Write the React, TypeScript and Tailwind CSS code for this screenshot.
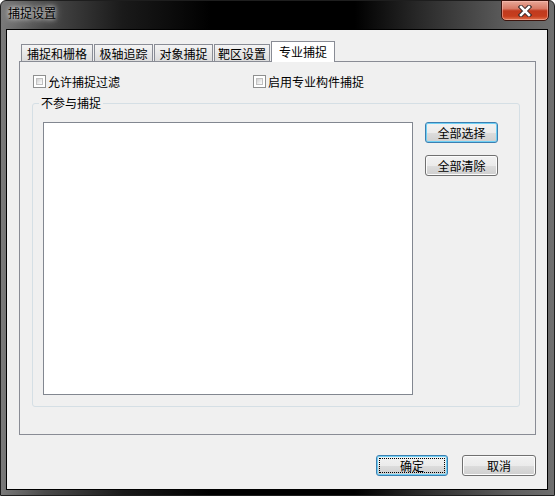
import React from "react";

const font = "font-['Noto_Sans_CJK_SC','Noto_Sans_CJK_JP',sans-serif]";

function Checkbox({ label }: { label: string }) {
  return (
    <div className="flex items-center gap-[2px] h-[13px]">
      <div className="w-[13px] h-[13px] border border-[#8e8f8f] bg-white p-[2px]">
        <div className="w-full h-full border border-[#c0c0c0] bg-[linear-gradient(135deg,#cfcfcf_0%,#ebebeb_55%,#ffffff_100%)]" />
      </div>
      <span className="text-[12px] leading-[13px] text-black">{label}</span>
    </div>
  );
}

function Button({
  label,
  w,
  focus,
  dotted,
}: {
  label: string;
  w: string;
  focus?: boolean;
  dotted?: boolean;
}) {
  return (
    <div
      className={`relative h-[21px] ${w} rounded-[3px] border flex items-center justify-center text-[12px] leading-[12px] text-black bg-[linear-gradient(180deg,#f2f2f2_0%,#ebebeb_50%,#dddddd_50%,#cfcfcf_100%)] ${
        focus
          ? "border-[#3c7fb1] shadow-[inset_0_0_0_1px_#6fd0f5]"
          : "border-[#707070] shadow-[inset_0_0_0_1px_#fcfcfc]"
      }`}
    >
      {dotted && (
        <div className="absolute inset-[2px] border border-dotted border-black" />
      )}
      <span className="relative">{label}</span>
    </div>
  );
}

export default function App() {
  const tabs: { label: string; w: string }[] = [
    { label: "捕捉和栅格", w: "w-[72px]" },
    { label: "极轴追踪", w: "w-[59px]" },
    { label: "对象捕捉", w: "w-[59px]" },
    { label: "靶区设置", w: "w-[56px]" },
  ];
  return (
    <div className={`w-[555px] h-[496px] bg-white ${font}`}>
      <div className="relative w-[555px] h-[496px] rounded-t-[6px] border border-[#1e1e1e] bg-[linear-gradient(90deg,#7a7a7a_0%,#4a4a4a_8%,#1a1a1a_22%,#000_38%,#000_64%,#2a2a2a_76%,#5e5e5e_92%,#6e6e6e_100%)] flex flex-col">
        {/* title bar */}
        <div className="h-[28px] flex items-start pl-[7px] pt-[5px]">
          <span className="text-[12px] leading-[14px] text-black [text-shadow:0_0_4px_rgba(255,255,255,0.9),0_0_8px_rgba(255,255,255,0.7)]">
            捕捉设置
          </span>
        </div>
        {/* close button */}
        <div className="absolute right-[5px] top-[-1px] w-[48px] h-[21px] rounded-b-[5px] border border-[#3e150e] shadow-[inset_0_0_0_1px_rgba(255,200,190,0.5)] bg-[linear-gradient(180deg,#e8a898_0%,#d87a66_40%,#c13a1e_52%,#c63d1d_80%,#e27450_100%)] flex items-center justify-center">
          <svg width="14" height="12" viewBox="0 0 14 12">
            <path d="M3 2 L11 10 M11 2 L3 10" stroke="#3a2a2a" strokeWidth="4.5" strokeLinecap="square" />
            <path d="M3 2 L11 10 M11 2 L3 10" stroke="#ffffff" strokeWidth="2.5" strokeLinecap="square" />
          </svg>
        </div>
        {/* body row */}
        <div className="flex-1 pl-[5px] pr-[6px] pb-[5px] flex">
          <div className="flex-1 border border-black bg-[#f0f0f0] flex flex-col pt-[11px] pl-[12px] pr-[11px] pb-[13px]">
            {/* tab row */}
            <div className="h-[20px] flex items-end gap-[1px] pl-[2px]">
              {tabs.map((t) => (
                <div
                  key={t.label}
                  className={`${t.w} h-[17px] border-t border-l border-r border-[#898c95] bg-[linear-gradient(180deg,#f4f4f4_0%,#e8e8e8_50%,#dcdcdc_100%)] text-[12px] leading-[12px] text-black flex justify-center pt-[3px]`}
                >
                  {t.label}
                </div>
              ))}
              <div className="relative z-10 w-[64px] h-[21px] mb-[-1px] border-t border-l border-r border-[#898c95] bg-white text-[12px] leading-[12px] text-black flex justify-center pt-[4px]">
                专业捕捉
              </div>
            </div>
            {/* panel */}
            <div className="h-[374px] border border-[#898c95] bg-[#f0f0f0] flex flex-col px-[12px] pt-[13px]">
              <div className="flex h-[13px] pl-[1px]">
                <div className="w-[220px]">
                  <Checkbox label="允许捕捉过滤" />
                </div>
                <Checkbox label="启用专业构件捕捉" />
              </div>
              {/* group box */}
              <div className="relative mt-[15px] w-[488px] h-[304px] rounded-[3px] border border-[#d5dfe5] flex pl-[10px] pt-[18px] pb-[11px]">
                <span className="absolute left-[6px] top-[-7px] bg-[#f0f0f0] px-[2px] text-[12px] leading-[12px] text-black">
                  不参与捕捉
                </span>
                <div className="w-[370px] h-[273px] border border-[#828790] bg-white" />
                <div className="ml-[12px] flex flex-col gap-[12px]">
                  <Button label="全部选择" w="w-[73px]" focus />
                  <Button label="全部清除" w="w-[73px]" />
                </div>
              </div>
            </div>
            {/* bottom buttons */}
            <div className="mt-[20px] flex justify-end gap-[14px]">
              <Button label="确定" w="w-[72px]" focus dotted />
              <Button label="取消" w="w-[74px]" />
            </div>
          </div>
        </div>
      </div>
    </div>
  );
}
